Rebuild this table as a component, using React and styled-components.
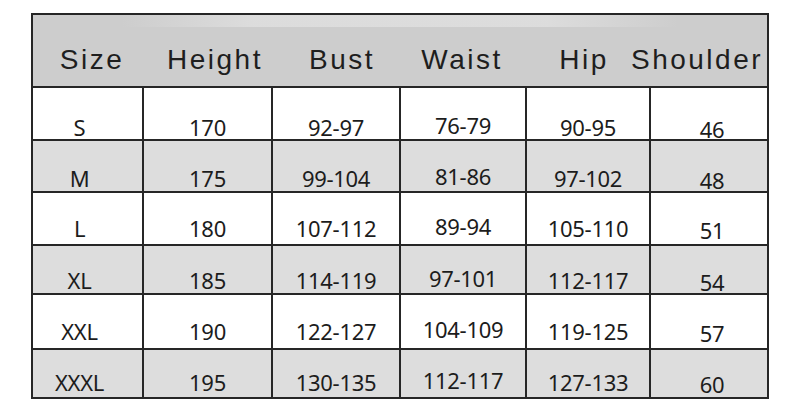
import styled, { createGlobalStyle } from 'styled-components';

const GlobalStyle = createGlobalStyle`
    html, body {
        margin: 0;
        padding: 0;
        background: #ffffff;
    }
`;

const Page = styled.main`
    width: 800px;
    height: 414px;
    padding: 13px 0 0 31px;
    box-sizing: border-box;
    background: #ffffff;
`;

const Table = styled.section`
    width: 738px;
    display: grid;
    grid-template-columns: 109px 127px 126px 124px 122px 116px;
    grid-template-rows: 71px 51px 50px 51px 47px 53px 47px;
    gap: 2px;
    padding: 2px;
    box-sizing: border-box;
    background: #262626;
`;

const Header = styled.div`
    grid-column: 1 / -1;
    display: grid;
    grid-template-columns: 118px 128px 126px 114px 130px 96px 1fr;
    padding-top: 31px;
    box-sizing: border-box;
    background:
        linear-gradient(to right, rgba(222, 222, 222, 0) 12%, rgba(222, 222, 222, 0.9) 30%, rgba(222, 222, 222, 0.9) 70%, rgba(222, 222, 222, 0) 88%) top / 100% 12px no-repeat,
        #cdcdcd;
`;

const HeadCell = styled.div`
    display: flex;
    justify-content: center;
    align-items: flex-start;
    white-space: nowrap;
    font-family: "Liberation Sans", Arial, sans-serif;
    font-size: 28px;
    line-height: 1;
    letter-spacing: 2.5px;
    color: #1e1e1e;
`;

const Cell = styled.div`
    display: flex;
    justify-content: center;
    align-items: flex-end;
    padding: 0 ${p => p.$padRight}px 0 ${p => p.$padLeft}px;
    background: ${p => (p.$shaded ? '#dddddd' : '#ffffff')};
    font-family: "Noto Sans", "Open Sans", sans-serif;
    font-size: 22px;
    line-height: 1;
    color: #1c1c1c;
    white-space: nowrap;
`;

const Value = styled.span`
    margin-bottom: ${p => p.$lift}px;
    letter-spacing: -0.3px;
`;

const headings = ['Size', 'Height', 'Bust', 'Waist', 'Hip', 'Shoulder'];

// gap between baseline and row bottom, per row
const rows = [
    { values: ['S', '170', '92-97', '76-79', '90-95', '46'], gap: 3 },
    { values: ['M', '175', '99-104', '81-86', '97-102', '48'], gap: 4 },
    { values: ['L', '180', '107-112', '89-94', '105-110', '51'], gap: 7 },
    { values: ['XL', '185', '114-119', '97-101', '112-117', '54'], gap: 4 },
    { values: ['XXL', '190', '122-127', '104-109', '119-125', '57'], gap: 8 },
    { values: ['XXXL', '195', '130-135', '112-117', '127-133', '60'], gap: 6 },
];

// per-column nudges: vertical (positive = higher) and horizontal padding
const columns = [
    { up: 0, left: 0, right: 16 },
    { up: 0, left: 0, right: 0 },
    { up: 0, left: 0, right: 0 },
    { up: 2, left: 0, right: 0 },
    { up: 0, left: 0, right: 0 },
    { up: -2, left: 6, right: 0 },
];

function App() {
    return (
        <>
            <GlobalStyle />
            <Page>
                <Table>
                    <Header>
                        {headings.map(h => (
                            <HeadCell key={h}>{h}</HeadCell>
                        ))}
                    </Header>
                    {rows.map((row, r) =>
                        row.values.map((v, c) => (
                            <Cell
                                key={`${r}-${c}`}
                                $shaded={r % 2 === 1}
                                $padLeft={columns[c].left}
                                $padRight={columns[c].right}
                            >
                                <Value $lift={row.gap - 1.5 + columns[c].up}>{v}</Value>
                            </Cell>
                        ))
                    )}
                </Table>
            </Page>
        </>
    );
}

export default App;
